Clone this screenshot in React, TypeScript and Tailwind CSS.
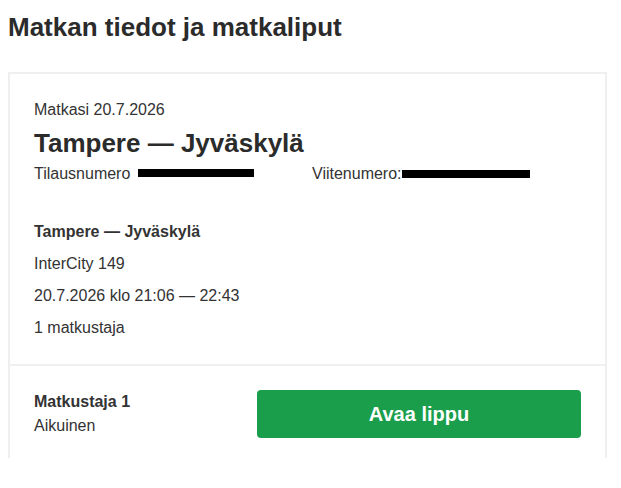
export default function App() {
  const font = { fontFamily: '"Liberation Sans", Arial, sans-serif' };
  return (
    <div className="min-h-[488px] bg-white px-2 text-[#333]" style={font}>
      <h1 className="pt-3 text-[26px] font-bold leading-[30px] text-[#2b2b2b]">
        Matkan tiedot ja matkaliput
      </h1>
      <div className="mt-[30px] w-[599px] border-x-2 border-t-2 border-[#efefef]">
        <div className="px-6 pb-6 pt-6">
          <div className="text-base leading-6">Matkasi 20.7.2026</div>
          <div className="mt-[5px] text-[26px] font-bold leading-[32px] text-[#2b2b2b]">
            Tampere — Jyväskylä
          </div>
          <div className="mt-[3px] flex text-base leading-6">
            <div className="flex w-[278px] items-center">
              <span>Tilausnumero</span>
              <span className="ml-2 inline-block h-[8px] w-[116px] -translate-y-px bg-black" />
            </div>
            <div className="flex items-center">
              <span>Viitenumero:</span>
              <span className="inline-block h-[8px] w-[128px] bg-black" />
            </div>
          </div>
          <div className="mt-[34px] text-base font-bold leading-6">Tampere — Jyväskylä</div>
          <div className="mt-2 text-base leading-6">InterCity 149</div>
          <div className="mt-2 text-base leading-6">20.7.2026 klo 21:06 — 22:43</div>
          <div className="mt-2 text-base leading-6">1 matkustaja</div>
        </div>
        <div className="h-[2px] bg-[#f0f0f0]" />
        <div className="flex items-center justify-between px-6 pb-5 pt-6">
          <div className="text-base leading-6">
            <div className="font-bold">Matkustaja 1</div>
            <div>Aikuinen</div>
          </div>
          <button className="flex h-12 w-[324px] items-center justify-center rounded bg-[#1a9e4b] text-[20px] font-bold text-white">
            Avaa lippu
          </button>
        </div>
      </div>
    </div>
  );
}
